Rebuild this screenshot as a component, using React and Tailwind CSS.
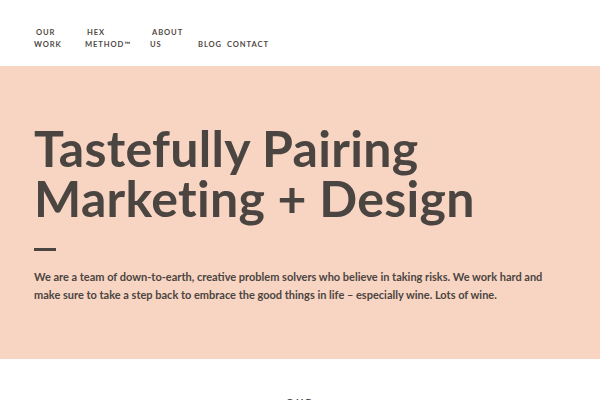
import React from 'react';

const navItems = [
    { first: 'Our', second: 'Work', width: 'w-[51px]' },
    { first: 'Hex', second: 'Method™', width: 'w-[65px]' },
    { first: 'About', second: 'Us', width: 'w-[48px]' },
    { first: null, second: 'Blog', width: 'w-[29px]' },
    { first: null, second: 'Contact', width: '' },
];

const App = () => {
    return (
        <div className="min-h-screen bg-white text-[#4b4541] font-['Lato',sans-serif]">
            {/* Header */}
            <header className="h-[66px] pl-[34px] pt-[26px]">
                <nav className="flex items-end">
                    {navItems.map((item) => (
                        <a key={item.second} href="#" className={`${item.width} block text-[7.6px] leading-[12px] font-bold uppercase tracking-[0.9px] text-[#504a46]`}>
                            {item.first && <span className="block pl-[2px]">{item.first}</span>}
                            <span className="block">{item.second}</span>
                        </a>
                    ))}
                </nav>
            </header>

            {/* Hero */}
            <section className="bg-[#f8d4c2] h-[293px] pl-[34px] pt-[57px]">
                <h1 className="text-[50px] leading-[50px] font-bold tracking-[0.3px]">
                    Tastefully Pairing<br />Marketing + Design
                </h1>
                <div className="w-[22px] h-[3px] bg-[#4b4541] mt-[25px]"></div>
                <p className="mt-[17px] text-[11px] leading-[18px] font-bold w-[515px]">
                    We are a team of down-to-earth, creative problem solvers who believe in taking risks. We work hard and make sure to take a step back to embrace the good things in life – especially wine. Lots of wine.
                </p>
            </section>

            {/* Work */}
            <section className="pt-[37px] text-center">
                <h2 className="text-[10px] leading-[12px] font-bold uppercase tracking-[2px]">Our</h2>
            </section>
        </div>
    );
};

export default App;
